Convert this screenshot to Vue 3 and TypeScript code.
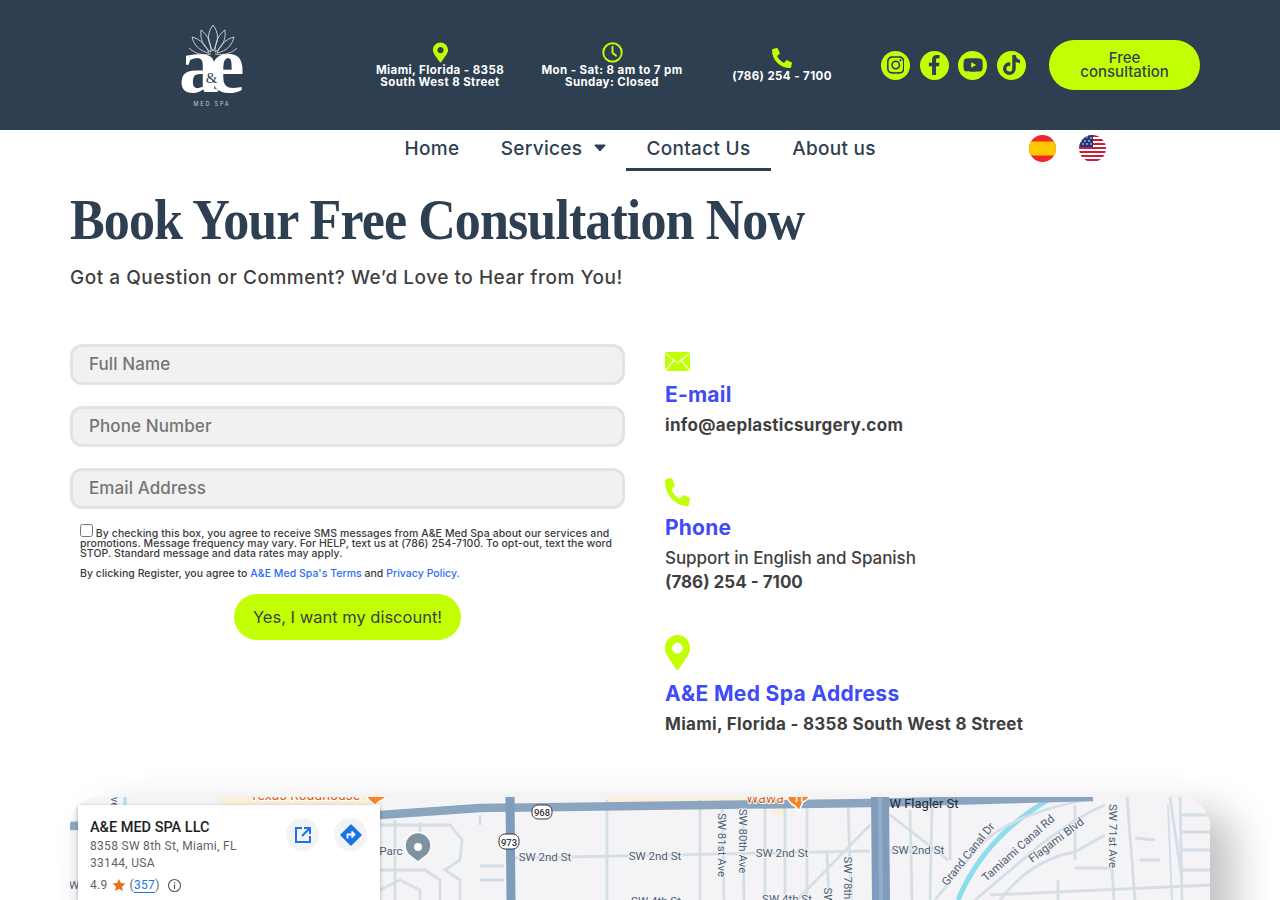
<script setup lang="ts">
const pinPath = 'M172.268 501.67C26.97 291.031 0 262.41 0 192 0 85.961 85.961 0 192 0s192 85.961 192 192c0 70.41-26.97 99.031-172.268 309.67-9.535 13.774-29.93 13.773-39.464 0zM192 272c44.183 0 80-35.817 80-80s-35.817-80-80-80-80 35.817-80 80 35.817 80 80 80z'
const phonePath = 'M493.4 24.6l-104-24c-11.3-2.6-22.9 3.3-27.5 13.9l-48 112c-4.2 9.8-1.4 21.3 6.9 28l60.6 49.6c-36 76.7-98.9 140.5-177.2 177.2l-49.6-60.6c-6.8-8.3-18.2-11.1-28-6.9l-112 48C3.9 366.5-2 378.1.6 389.4l24 104C27.1 504.2 36.7 512 48 512c256.1 0 464-207.5 464-464 0-11.2-7.7-20.9-18.6-23.4z'

const socials = [
  { name: 'instagram', box: '0 0 448 512', size: 20, d: 'M224.1 141c-63.6 0-114.9 51.3-114.9 114.9s51.3 114.9 114.9 114.9S339 319.5 339 255.9 287.7 141 224.1 141zm0 189.6c-41.1 0-74.7-33.5-74.7-74.7s33.5-74.7 74.7-74.7 74.7 33.5 74.7 74.7-33.6 74.7-74.7 74.7zm146.4-194.3c0 14.9-12 26.8-26.8 26.8-14.9 0-26.8-12-26.8-26.8s12-26.8 26.8-26.8 26.8 12 26.8 26.8zm76.1 27.2c-1.7-35.9-9.9-67.7-36.2-93.9-26.2-26.2-58-34.4-93.9-36.2-37-2.1-147.9-2.1-184.9 0-35.8 1.7-67.6 9.9-93.9 36.1s-34.4 58-36.2 93.9c-2.1 37-2.1 147.9 0 184.9 1.7 35.9 9.9 67.7 36.2 93.9s58 34.4 93.9 36.2c37 2.1 147.9 2.1 184.9 0 35.9-1.7 67.7-9.9 93.9-36.2 26.2-26.2 34.4-58 36.2-93.9 2.1-37 2.1-147.8 0-184.8zM398.8 388c-7.8 19.6-22.9 34.7-42.6 42.6-29.5 11.7-99.5 9-132.1 9s-102.7 2.6-132.1-9c-19.6-7.8-34.7-22.9-42.6-42.6-11.7-29.5-9-99.5-9-132.1s-2.6-102.7 9-132.1c7.8-19.6 22.9-34.7 42.6-42.6 29.5-11.7 99.5-9 132.1-9s102.7-2.6 132.1 9c19.6 7.8 34.7 22.9 42.6 42.6 11.7 29.5 9 99.5 9 132.1s2.7 102.7-9 132.1z' },
  { name: 'facebook', box: '0 0 320 512', size: 20, d: 'M279.14 288l14.22-92.66h-88.91v-60.13c0-25.35 12.42-50.06 52.24-50.06h40.42V6.26S260.43 0 225.36 0c-73.22 0-121.08 44.38-121.08 124.72v70.62H22.89V288h81.39v224h100.17V288z' },
  { name: 'youtube', box: '0 0 576 512', size: 18, d: 'M549.655 124.083c-6.281-23.65-24.787-42.276-48.284-48.597C458.781 64 288 64 288 64S117.22 64 74.629 75.486c-23.497 6.322-42.003 24.947-48.284 48.597-11.412 42.867-11.412 132.305-11.412 132.305s0 89.438 11.412 132.305c6.281 23.65 24.787 41.5 48.284 47.821C117.22 448 288 448 288 448s170.78 0 213.371-11.486c23.497-6.321 42.003-24.171 48.284-47.821 11.412-42.867 11.412-132.305 11.412-132.305s0-89.438-11.412-132.305zm-317.51 213.508V175.185l142.739 81.205-142.739 81.201z' },
  { name: 'tiktok', box: '0 0 448 512', size: 20, d: 'M448,209.91a210.06,210.06,0,0,1-122.77-39.25V349.38A162.55,162.55,0,1,1,185,188.31V278.2a74.62,74.62,0,1,0,52.23,71.18V0l88,0a121.18,121.18,0,0,0,1.86,22.17h0A122.18,122.18,0,0,0,381,102.39a121.43,121.43,0,0,0,67,20.14Z' },
]

const navItems = [
  { label: 'Home', caret: false, active: false },
  { label: 'Services', caret: true, active: false },
  { label: 'Contact Us', caret: false, active: true },
  { label: 'About us', caret: false, active: false },
]

const fields = ['Full Name', 'Phone Number', 'Email Address']

const usaStripes = [0, 1, 2, 3, 4, 5, 6]

const lightRoads = [
  'M607 800 L607 900', 'M700 800 L700 900', 'M722 800 L724 900', 'M743 800 L744 900', 'M765 800 L765 900', 'M785 800 L785 900', 'M807 800 L807 900', 'M848 800 L851 900',
  'M515 858 L870 851', 'M827 853 L829 900', 'M797 900 L870 825', 'M480 815 L480 825',
  'M380 825 L450 825 L462 840 L460 860 L445 870 L460 880 L460 900', 'M395 820 L395 900', 'M380 870 L425 870 L440 880 L440 900', 'M420 822 L420 848', 'M380 890 L400 880 L420 890 L420 900',
  'M480 866 H504 M480 880 H504',
  'M890 815 L948 860', 'M910 810 L912 900', 'M932 808 L930 900', 'M950 808 L950 860', 'M890 851 L940 851',
  'M935 900 L980 845 Q1010 815 1085 800', 'M975 900 L1040 845 Q1080 815 1105 805',
  'M1000 900 Q1030 860 1075 852 L1105 835', 'M1075 860 L1075 805', 'M1075 868 L1112 868 L1114 900', 'M990 895 L1210 885', 'M1058 880 L1058 900',
  'M1127 797 L1135 900', 'M1170 797 L1182 880', 'M1180 797 L1182 900', 'M1182 815 L1210 815', 'M1182 832 L1210 832', 'M1182 850 L1210 850', 'M1182 870 L1210 870',
  'M1135 838 L1155 840', 'M1140 860 L1160 860',
]

interface MapLabel { text: string; x: number; y: number; rot?: number; cls?: string }
const mapLabels: MapLabel[] = [
  { text: 'SW 2nd St', x: 545, y: 861 },
  { text: 'SW 2nd St', x: 655, y: 860 },
  { text: 'SW 2nd St', x: 782, y: 857 },
  { text: 'SW 2nd St', x: 918, y: 854 },
  { text: 'SW 4th St', x: 656, y: 905 },
  { text: 'SW 4th St', x: 787, y: 903 },
  { text: 'SW 81st Ave', x: 722, y: 849, rot: 90 },
  { text: 'SW 80th Ave', x: 743, y: 845, rot: 90 },
  { text: 'SW 78th', x: 848, y: 882, rot: 90 },
  { text: 'SW', x: 828, y: 900, rot: 90 },
  { text: 'SW 71st Ave', x: 1113, y: 840, rot: 90 },
  { text: 'Grand Canal Dr', x: 968, y: 858, rot: -51 },
  { text: 'Tamiami Canal Rd', x: 1018, y: 852, rot: -42 },
  { text: 'Flagami Blvd', x: 1056, y: 844, rot: -37 },
  { text: 'Parc', x: 391, y: 855 },
  { text: 'Ave', x: 115, y: 803, rot: 90 },
  { text: 'W Flagler St', x: 924, y: 808, cls: 'dark' },
  { text: 'Texas Roadhouse', x: 305, y: 800, cls: 'orange' },
  { text: 'Wawa', x: 765, y: 803, cls: 'orange' },
  { text: 'W', x: 74, y: 889 },
]
</script>

<template>
  <div class="page">
    <header class="topbar">
      <div class="logo">
        <svg width="70" height="84" viewBox="0 0 70 84" aria-label="A&amp;E Med Spa">
          <g fill="none" stroke="#e8ebee" stroke-width="0.8" stroke-linejoin="round">
            <path d="M35 0 C29 8 29 16 35 26 C41 16 41 8 35 0Z" />
            <path d="M23 5 C22 14 25 22 33 27 C33 18 30 10 23 5Z" />
            <path d="M47 5 C48 14 45 22 37 27 C37 18 40 10 47 5Z" />
            <path d="M14 12 C16 20 21 26 31 28 C28 20 22 14 14 12Z" />
            <path d="M56 12 C54 20 49 26 39 28 C42 20 48 14 56 12Z" />
            <path d="M11 23 C16 28 24 31 33 29 M59 23 C54 28 46 31 37 29" />
          </g>
          <text class="logo-a" x="1" y="67">a</text>
          <text class="logo-e" x="31" y="67">e</text>
          <text class="logo-amp" x="33.5" y="58">&amp;</text>
          <text class="logo-sub" x="34" y="81">MED SPA</text>
        </svg>
      </div>

      <div class="info info-1">
        <svg class="info-icon" width="15" height="21" viewBox="0 0 384 512"><path :d="pinPath" /></svg>
        <p>Miami, Florida - 8358<br />South West 8 Street</p>
      </div>
      <div class="info info-2">
        <svg class="info-icon" width="21" height="21" viewBox="0 0 20 20">
          <circle cx="10" cy="10" r="8.8" fill="none" stroke="#c2ff05" stroke-width="1.8" />
          <path d="M10 4.5 V10.3 L13.4 13" fill="none" stroke="#c2ff05" stroke-width="1.8" stroke-linecap="round" />
        </svg>
        <p>Mon - Sat: 8 am to 7 pm<br />Sunday: Closed</p>
      </div>
      <div class="info info-3">
        <svg class="info-icon flip" width="20" height="20" viewBox="0 0 512 512"><path :d="phonePath" /></svg>
        <p>(786) 254 - 7100</p>
      </div>

      <div class="socials">
        <a v-for="s in socials" :key="s.name" class="social" href="#" :aria-label="s.name">
          <svg :height="s.size" :viewBox="s.box"><path :d="s.d" /></svg>
        </a>
      </div>

      <a class="cta" href="#">Free consultation</a>
    </header>

    <nav class="nav">
      <div class="nav-links">
        <a v-for="item in navItems" :key="item.label" href="#" class="nav-item" :class="{ active: item.active }">
          {{ item.label }}
          <svg v-if="item.caret" class="caret" width="12" height="8" viewBox="0 0 12 8"><path d="M1.2 1.2 H10.8 L6 6.6Z" stroke="#2e3f52" stroke-width="1.4" stroke-linejoin="round" /></svg>
        </a>
      </div>
      <div class="flags">
        <svg width="27" height="27" viewBox="0 0 27 27" aria-label="Español">
          <clipPath id="es"><circle cx="13.5" cy="13.5" r="13.5" /></clipPath>
          <g clip-path="url(#es)">
            <rect width="27" height="27" fill="#f1262b" />
            <rect y="6.5" width="27" height="14" fill="#fdc800" />
          </g>
        </svg>
        <svg width="27" height="27" viewBox="0 0 27 27" aria-label="English">
          <clipPath id="us"><circle cx="13.5" cy="13.5" r="13.5" /></clipPath>
          <g clip-path="url(#us)">
            <rect width="27" height="27" fill="#fff" />
            <rect v-for="i in usaStripes" :key="i" :y="i * 4" width="27" height="2" fill="#c8203c" />
            <rect width="14" height="12" fill="#21387f" />
            <g fill="#fff">
              <circle cx="4" cy="3" r=".8" /><circle cx="8" cy="2" r=".8" /><circle cx="12" cy="3" r=".8" />
              <circle cx="2" cy="6" r=".8" /><circle cx="6" cy="6" r=".8" /><circle cx="10" cy="6" r=".8" />
              <circle cx="4" cy="9" r=".8" /><circle cx="8" cy="9" r=".8" /><circle cx="12" cy="9" r=".8" />
            </g>
          </g>
        </svg>
      </div>
    </nav>

    <main class="main">
      <h1>Book Your Free Consultation Now</h1>
      <p class="lead">Got a Question or Comment? We’d Love to Hear from You!</p>

      <div class="columns">
        <form class="form" @submit.prevent>
          <input v-for="f in fields" :key="f" class="field" type="text" :placeholder="f" />
          <div class="legal">
            <p class="consent">
              <input class="check" type="checkbox" />
              By checking this box, you agree to receive SMS messages from A&amp;E Med Spa about our services and promotions. Message frequency may vary. For HELP, text us at (786) 254-7100. To opt-out, text the word STOP. Standard message and data rates may apply.
            </p>
            <p class="terms">By clicking Register, you agree to <a href="#">A&amp;E Med Spa's Terms</a> and <a href="#">Privacy Policy.</a></p>
          </div>
          <button class="submit" type="submit">Yes, I want my discount!</button>
        </form>

        <aside class="contact">
          <section class="block block-mail">
            <svg class="c-icon" width="25" height="19" viewBox="0 0 25 19">
              <rect width="25" height="19" rx="2" fill="#c2ff05" />
              <path d="M1 2 L12.5 11 L24 2 M1 18 L8.5 8.5 M24 18 L16.5 8.5" fill="none" stroke="#f4ffd0" stroke-width="1.3" />
            </svg>
            <h2>E-mail</h2>
            <p class="strong wide">info@aeplasticsurgery.com</p>
          </section>
          <section class="block block-phone">
            <svg class="c-icon flip" width="25" height="28" viewBox="0 0 512 512" preserveAspectRatio="none"><path :d="phonePath" /></svg>
            <h2>Phone</h2>
            <p>Support in English and Spanish</p>
            <p class="strong">(786) 254 - 7100</p>
          </section>
          <section class="block block-pin">
            <svg class="c-icon" width="25" height="35" viewBox="0 0 384 512" preserveAspectRatio="none"><path :d="pinPath" /></svg>
            <h2>A&amp;E Med Spa Address</h2>
            <p class="strong wide">Miami, Florida - 8358 South West 8 Street</p>
          </section>
        </aside>
      </div>

      <div class="map">
        <svg class="map-svg" width="1140" height="300" viewBox="70 797 1140 300">
          <rect x="70" y="797" width="1140" height="300" fill="#f4f3f5" />
          <path d="M215 797 L385 797 L378 812 L240 822Z" fill="#f9f0dc" />
          <path d="M607 797 H790 V803 H607Z" fill="#f9f0dc" />
          <path d="M770 807 H785 V816 H776Z" fill="#f9f0dc" />
          <path d="M1053 797 Q985 835 958 900" fill="none" stroke="#8fdcee" stroke-width="5" />
          <path d="M125 797 V830" fill="none" stroke="#a8def0" stroke-width="3" />
          <path v-for="(d, i) in lightRoads" :key="i" :d="d" fill="none" stroke="#d4dee7" stroke-width="2.8" />
          <path d="M70 826 L380 815 L480 808 L870 803 L1093 797" fill="none" stroke="#8ba5c1" stroke-width="8.5" />
          <path d="M510 797 L511 900" fill="none" stroke="#7f9cbd" stroke-width="9" />
          <path d="M880 797 L881 900" fill="none" stroke="#7f9cbd" stroke-width="18" />
          <path d="M880 797 L881 900" fill="none" stroke="#94acc7" stroke-width="4" />
          <path d="M1168 805 L1172 900" fill="none" stroke="#d4dee7" stroke-width="2" />

          <text v-for="l in mapLabels" :key="l.text + l.x" class="map-label" :class="l.cls" :x="l.x" :y="l.y"
            :transform="l.rot ? `rotate(${l.rot} ${l.x} ${l.y - 4})` : undefined">{{ l.text }}</text>

          <g class="shield">
            <rect x="532" y="805" width="20" height="14" rx="6" />
            <text x="542" y="815.5">968</text>
            <rect x="499" y="834" width="20" height="15" rx="6" />
            <text x="509" y="845.5">973</text>
          </g>

          <path d="M375 790 m-14 0 a14 14 0 1 1 28 0 a14 14 0 0 1 -9 12 L375 806 L370 802 a14 14 0 0 1 -5 -12" fill="#f5842b" stroke="#fff" stroke-width="1.5" transform="translate(0 -1)" />
          <path d="M787 793 a13 13 0 1 1 24 0 a13 13 0 0 1 -8 9 L799 811 L795 806 a13 13 0 0 1 -8 -13" fill="#f5842b" stroke="#fff" stroke-width="1.5" />
          <text class="marker-glyph" x="799" y="802">11</text>
          <path d="M418 862 L409 855 a13 13 0 1 1 18 0Z" fill="#7e939f" stroke="#fff" stroke-width="1.5" />
          <circle cx="418" cy="847" r="4" fill="#fff" />
        </svg>

        <div class="place">
          <div class="place-head">
            <div class="place-text">
              <h3>A&amp;E MED SPA LLC</h3>
              <p>8358 SW 8th St, Miami, FL<br />33144, USA</p>
            </div>
            <div class="place-actions">
              <span class="round">
                <svg width="18" height="18" viewBox="0 0 18 18"><path d="M8 2 H2 V16 H16 V10 M10 2 H16 V8 M16 2 L8 10" fill="none" stroke="#1a73e8" stroke-width="2" /></svg>
              </span>
              <span class="round">
                <svg width="22" height="22" viewBox="0 0 22 22">
                  <path d="M11 1 L21 11 L11 21 L1 11Z" fill="#1a73e8" stroke="#1a73e8" stroke-width="1.5" stroke-linejoin="round" />
                  <path d="M7.5 14.5 V10.5 H14 M11.5 7.5 L14.5 10.5 L11.5 13.5" fill="none" stroke="#fff" stroke-width="1.8" />
                </svg>
              </span>
            </div>
          </div>
          <div class="rating">
            <span>4.9</span>
            <svg width="14" height="14" viewBox="0 0 24 24"><path d="M12 1.5 L15.2 8.7 L23 9.5 L17.1 14.8 L18.8 22.5 L12 18.5 L5.2 22.5 L6.9 14.8 L1 9.5 L8.8 8.7Z" fill="#e7711b" /></svg>
            <span>(<a href="#">357</a>)</span>
            <svg class="info-c" width="15" height="15" viewBox="0 0 16 16">
              <circle cx="8" cy="8" r="6.4" fill="none" stroke="#5b5b5b" stroke-width="1.2" />
              <path d="M8 7 V11.6 M8 4.4 V5.8" stroke="#5b5b5b" stroke-width="1.4" />
            </svg>
          </div>
        </div>
      </div>
    </main>
  </div>
</template>

<style>
html, body { margin: 0; background: #fff; }
</style>

<style scoped>
.page {
  height: 900px;
  overflow: hidden;
  font-family: Inter, "Open Sans", sans-serif;
  color: #3a3a3a;
  background: #fff;
}
p, h1, h2, h3 { margin: 0; }
a { text-decoration: none; color: inherit; }

.topbar {
  height: 130px;
  box-sizing: border-box;
  padding-left: 80px;
  display: flex;
  align-items: center;
  background: #2e3f52;
}
.logo { width: 265px; display: flex; justify-content: center; padding-top: 4px; }
.logo-a, .logo-e { font-family: "Liberation Serif", serif; font-weight: 700; fill: #fff; font-size: 80px; }
.logo-amp { font-family: "Liberation Serif", serif; font-size: 15px; fill: #2e3f52; text-anchor: middle; }
.logo-sub { font-family: Inter, sans-serif; font-size: 5.5px; letter-spacing: 1.8px; fill: #c6ccd2; text-anchor: middle; }

.info { display: flex; flex-direction: column; align-items: center; text-align: center; gap: 1px; }
.info p { color: #fff; font-size: 11.5px; font-weight: 700; line-height: 12.5px; letter-spacing: .4px; white-space: nowrap; }
.info-icon { fill: #c2ff05; }
.info-1 { width: 190px; }
.info-2 { width: 154px; }
.info-3 { width: 186px; gap: 2px; }
.flip { transform: scaleX(-1); }

.socials { margin-left: 6px; display: flex; gap: 9.7px; }
.social {
  width: 29px; height: 29px; border-radius: 50%;
  background: #c2ff05;
  display: flex; align-items: center; justify-content: center;
}
.social svg { fill: #2e3f52; display: block; }

.cta {
  margin-left: 23px;
  width: 151px; height: 50px;
  box-sizing: border-box;
  padding: 0 24px;
  border-radius: 25px;
  background: #c2ff05;
  color: #3a3f52;
  font-size: 15px; font-weight: 500; line-height: 14px;
  text-align: center;
  display: flex; align-items: center; justify-content: center;
}

.nav { height: 41px; padding-left: 383px; position: relative; }
.nav-links { display: grid; grid-template-columns: 98px 145px 145px 126px; }
.nav-item {
  box-sizing: border-box;
  height: 41px;
  display: flex; align-items: center; justify-content: center; gap: 12px;
  color: #2e3f52;
  font-size: 19px; font-weight: 500; letter-spacing: .3px;
  padding-bottom: 5px;
  white-space: nowrap;
}
.nav-item.active { border-bottom: 3px solid #2e3f52; padding-bottom: 2px; }
.caret { fill: #2e3f52; }
.flags {
  position: absolute; left: 1029px; top: 5px;
  display: flex; gap: 23px;
}

.main { padding: 0 70px; }
h1 {
  margin-top: 17px;
  color: #2e3f52;
  font-family: "Liberation Serif", serif;
  font-size: 56px; font-weight: 700; line-height: 64px;
  letter-spacing: -1px;
  white-space: nowrap;
  transform: scaleX(.93);
  transform-origin: left center;
}
.lead { margin-top: 12px; font-size: 19px; font-weight: 500; line-height: 28px; letter-spacing: .52px; color: #3f3f3f; }

.columns { margin-top: 52px; display: flex; gap: 40px; }
.form { width: 555px; display: flex; flex-direction: column; gap: 21px; align-items: stretch; }
.field {
  box-sizing: border-box;
  height: 41px;
  border: 3px solid #e3e3e3;
  border-radius: 12px;
  background: #f1f1f1;
  padding: 0 16px 1px;
  font: 500 17px Inter, sans-serif;
  letter-spacing: .1px;
  color: #3a3a3a;
  outline: none;
}
.field::placeholder { color: #757575; opacity: 1; }
.legal { margin-top: -6px; padding-left: 10px; }
.consent { font-size: 10.5px; font-weight: 500; line-height: 10px; color: #3a3a3a; letter-spacing: .07px; }
.check { margin: 0; width: 13px; height: 13px; vertical-align: 0; }
.terms { margin-top: 9px; font-size: 10.5px; font-weight: 500; line-height: 12px; letter-spacing: .03px; }
.terms a { color: #2b6cf6; }
.submit {
  margin-top: -7px;
  align-self: center;
  width: 227px; height: 46px;
  border: 0; border-radius: 23px;
  background: #c2ff05;
  color: #3f3f3f;
  font: 400 16.5px Inter, sans-serif;
}

.contact { padding-top: 8px; display: flex; flex-direction: column; }
.c-icon { display: block; fill: #c2ff05; }
.block h2 { margin-top: 10px; color: #3f4bf5; font-size: 21px; font-weight: 700; line-height: 28px; letter-spacing: .2px; }
.block p { font-size: 17px; line-height: 24px; font-weight: 500; color: #3f3f3f; letter-spacing: -.05px; }
.block p.strong { font-weight: 700; letter-spacing: 0; }
.block p.strong.wide { letter-spacing: .3px; }
.block-mail p { margin-top: 4px; }
.block-phone { margin-top: 41px; }
.block-phone h2 { margin-top: 8px; }
.block-phone p:nth-of-type(1) { margin-top: 4px; }
.block-pin { margin-top: 41px; }
.block-pin h2 { letter-spacing: .35px; }
.block-pin p { margin-top: 4px; }

.map {
  position: relative;
  margin-top: 61px;
  width: 1140px; height: 300px;
  border-radius: 30px;
  box-shadow: 25px 15px 40px rgba(0, 0, 0, .24);
}
.map-svg { display: block; border-radius: 30px; }
.map-label {
  font-family: Roboto, sans-serif;
  font-size: 11.5px;
  fill: #4d5f75;
  text-anchor: middle;
  stroke: #f4f3f5; stroke-width: 2px; paint-order: stroke;
}
.map-label.dark { fill: #1f2937; font-size: 13px; stroke: none; }
.map-label.orange { fill: #d9621a; font-size: 14px; stroke: #fff; }
.marker-glyph { font: 700 9px Roboto, sans-serif; fill: #fff; text-anchor: middle; }
.shield rect { fill: #fff; stroke: #3a3a3a; stroke-width: 1; }
.shield text { font: 500 9.5px Roboto, sans-serif; fill: #333; text-anchor: middle; }

.place {
  position: absolute;
  left: 8px; top: 8px;
  width: 302px; height: 200px;
  box-sizing: border-box;
  padding: 13px 12px;
  background: #fff;
  box-shadow: 0 1px 4px rgba(0, 0, 0, .3);
  font-family: Roboto, sans-serif;
}
.place-head { display: flex; justify-content: space-between; }
.place-text { width: 180px; }
h3 { font-size: 14.5px; font-weight: 500; line-height: 20px; color: #202124; }
.place-text p { font-size: 12px; line-height: 17px; letter-spacing: .3px; color: #5f6368; }
.place-actions { display: flex; gap: 15px; margin: 0 1px 0 0; }
.round {
  width: 33px; height: 33px; border-radius: 50%;
  background: #f1f3f4;
  display: flex; align-items: center; justify-content: center;
}
.rating { margin-top: 5px; display: flex; align-items: center; gap: 4px; font-size: 12px; letter-spacing: .3px; color: #5f6368; line-height: 16px; }
.rating a { color: #1a73e8; border-bottom: 1px solid #1a73e8; }
.info-c { margin-left: 3px; }
</style>
